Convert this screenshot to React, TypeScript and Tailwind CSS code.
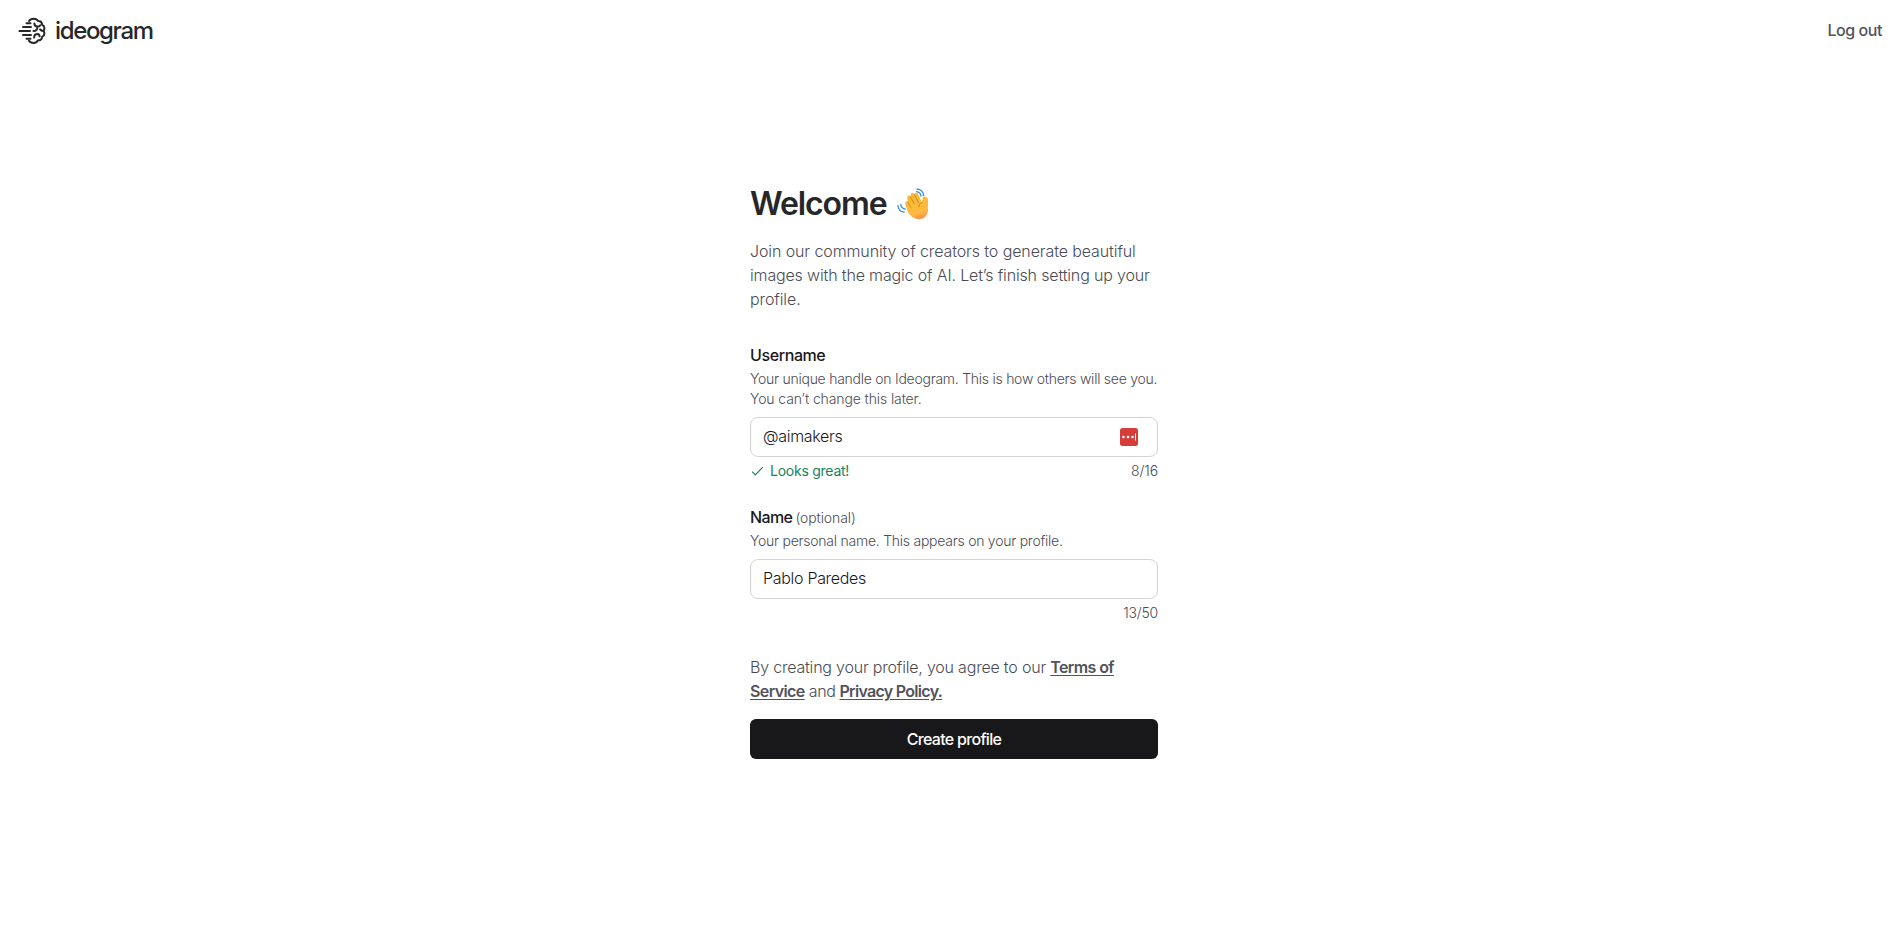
import { useState } from 'react';

function Logo() {
  return (
    <svg
      width="29"
      height="28"
      viewBox="0 0 29 28"
      fill="none"
      stroke="#27272a"
      strokeWidth="2"
      strokeLinecap="round"
      strokeLinejoin="round"
    >
      <path d="M8.500 6.200h4M5 10.100h8M1.400 14h10.600M5 17.900h8M8.500 21.800h4" />
      <path d="M11 3.900c.9-1.500 2.500-2.200 4.800-2.200 1.900 0 3.500.8 4.400 2.400 2.100 0 3.700 1.500 3.900 3.500 1.500.8 2.300 2 2.300 3.500 0 1.100-.3 2-.9 2.800.6.8.9 1.600.9 2.500 0 1.500-.8 2.700-2.300 3.400-.2 2.100-1.800 3.500-3.900 3.500-.9 1.600-2.500 2.600-4.400 2.600-2.300 0-3.900-.7-4.800-2.200" />
      <path d="M16.400 6.500c0 1.800 1.100 3 2.900 3.100 1.300 0 2.300-.4 3-1.300M19.300 9.800c.3 2.400-1.100 4.200-3.800 4.200M25.300 13.900c-1.400 0-2.500-.5-3.200-1.500M16.200 20.600c-.2-2.200 1-3.500 3.300-3.500 1.200.1 2 .9 2.100 2.200" />
    </svg>
  );
}

function WavingHand() {
  return (
    <svg width="31" height="32" viewBox="0 0 31 32" fill="none">
      <defs>
        <linearGradient id="skin" x1="12" y1="5" x2="23" y2="33" gradientUnits="userSpaceOnUse">
          <stop stopColor="#f6b832" />
          <stop offset="0.7" stopColor="#ffbb3f" />
          <stop offset="1" stopColor="#f98a55" />
        </linearGradient>
      </defs>
      <g stroke="#3b8fd1" strokeWidth="1.3" strokeLinecap="round">
        <path d="M20 1c3.600.3 6.400 3 6.700 6.600M19.600 3.600c2.400.3 4.100 2 4.500 4.500" />
        <path d="M1 17.500c.2 3.600 2.600 6.300 6.200 6.700M3.800 16.300c.3 2.500 1.800 4.200 4.200 4.700" />
      </g>
      <path
        d="M10.200 22.200 8.400 16c-.8-2.400 1.200-3.500 2.400-1.900l-.5-4.600c-.2-2.200 2.300-2.700 3.200-.8l.4-2.300c.5-1.800 2.700-1.600 3.400 0 .8-2 3.200-2.100 4-.2l3.600 8.200.8-4c.4-2 2.100-2.500 4.300-.8 1 .8 1 2 1 3.200v10.500c-1.200 4.800-4.600 8.200-8.500 8-5.800-.4-10.500-3.800-12.300-9.100Z"
        fill="url(#skin)"
      />
      <path
        d="m13.500 8.700 3.700 7.200M17.300 6.400l4 8M10.800 14.100l3 5.200M24.900 14.200c-2 1-3 2.600-3 4.500"
        stroke="#d88617"
        strokeWidth="1"
        strokeLinecap="round"
      />
    </svg>
  );
}

export default function App() {
  const [username, setUsername] = useState('@aimakers');
  const [name, setName] = useState('Pablo Paredes');

  return (
    <div className="min-h-screen bg-white font-['Inter',sans-serif] text-[#4b4b54]">
      <header className="flex h-[60px] items-center justify-between pr-[21px] pl-[18px]">
        <div className="flex items-center gap-2 pt-0.5">
          <Logo />
          <span className="text-[24px] leading-7 font-[550] tracking-[-1.350px] text-[#27272a]">
            ideogram
          </span>
        </div>
        <button type="button" className="text-base font-medium tracking-[-0.45px] text-[#52525b]">
          Log out
        </button>
      </header>

      <main className="flex justify-center pt-[120px] pl-[5px]">
        <form className="w-[408px]" onSubmit={(e) => e.preventDefault()}>
          <div className="flex h-12 items-center gap-[10px]">
            <h1 className="text-[32px] font-semibold tracking-[-1.1px] text-[#27272a]">Welcome</h1>
            <WavingHand />
          </div>
          <p className="mt-[11px] text-base leading-6 font-light whitespace-nowrap">
            <span className="tracking-[-0.105px]">Join our community of creators to generate beautiful</span>
            <br />
            <span className="tracking-[-0.155px]">images with the magic of AI. Let’s finish setting up your</span>
            <br />
            <span className="tracking-[-0.1px]">profile.</span>
          </p>

          <div className="mt-8">
            <label htmlFor="username" className="block text-base leading-6 font-medium tracking-[-0.4px] text-[#18181b]">
              Username
            </label>
            <p className="mt-[2px] text-sm leading-5 font-light whitespace-nowrap">
              <span className="tracking-[-0.257px]">
                Your unique handle on Ideogram. This is how others will see you.
              </span>
              <br />
              <span className="tracking-[-0.11px]">You can’t change this later.</span>
            </p>
            <div className="mt-2 flex h-10 items-center rounded-lg border border-[#d4d4d8] pr-[19px] pb-px pl-3">
              <input
                id="username"
                value={username}
                onChange={(e) => setUsername(e.target.value)}
                className="min-w-0 flex-1 pb-px text-base font-[350] tracking-[-0.3px] text-[#18181b] outline-none"
              />
              <svg width="18" height="18" viewBox="0 0 18 18" fill="#fff">
                <rect width="18" height="18" rx="2.500" fill="#d63d38" />
                <circle cx="3.400" cy="9" r="1.300" />
                <circle cx="8" cy="9" r="1.300" />
                <circle cx="12.500" cy="9" r="1.300" />
                <rect x="15" y="5.500" width="1" height="7.200" />
              </svg>
            </div>
            <div className="mt-1 flex h-5 items-center justify-between text-sm leading-5">
              <div className="flex items-center gap-[6px] text-[#168262]">
                <svg width="14" height="14" viewBox="0 0 14 14" fill="none" stroke="currentColor" strokeWidth="1.200">
                  <path d="M2.200 7.700 5.300 10.800 12.800 3.200" />
                </svg>
                <span className="tracking-[-0.25px]">Looks great!</span>
              </div>
              <span className="font-[350] tracking-[-0.1px]">8/16</span>
            </div>
          </div>

          <div className="mt-6">
            <label htmlFor="name" className="block text-base leading-6 font-medium whitespace-nowrap text-[#18181b]">
              <span className="tracking-[-0.6px]">Name</span>
              <span className="ml-[3px] text-sm font-light tracking-[-0.1px] text-[#4b4b54]">(optional)</span>
            </label>
            <p className="mt-[2px] text-sm leading-5 font-light tracking-[-0.25px] whitespace-nowrap">
              Your personal name. This appears on your profile.
            </p>
            <div className="mt-2 flex h-10 items-center rounded-lg border border-[#d4d4d8] px-3 pb-px">
              <input
                id="name"
                value={name}
                onChange={(e) => setName(e.target.value)}
                className="min-w-0 flex-1 pb-px text-base font-[350] tracking-[-0.3px] text-[#18181b] outline-none"
              />
            </div>
            <div className="mt-1 text-right text-sm leading-5 font-[350] tracking-[-0.2px]">13/50</div>
          </div>

          <p className="mt-8 text-base leading-6 font-light whitespace-nowrap">
            <span className="tracking-[-0.2px]">By creating your profile, you agree to our </span>
            <a href="#" className="font-semibold tracking-[-0.6px] text-[#52525b] underline underline-offset-2">
              Terms of
              <br />
              Service
            </a>
            <span className="tracking-[-0.4px]"> and </span>
            <a href="#" className="font-semibold tracking-[-0.7px] text-[#52525b] underline underline-offset-2">
              Privacy Policy.
            </a>
          </p>

          <button
            type="submit"
            className="mt-4 flex h-10 w-full items-center justify-center rounded-md bg-[#18181b] text-base font-medium tracking-[-0.7px] text-white"
          >
            Create profile
          </button>
        </form>
      </main>
    </div>
  );
}
